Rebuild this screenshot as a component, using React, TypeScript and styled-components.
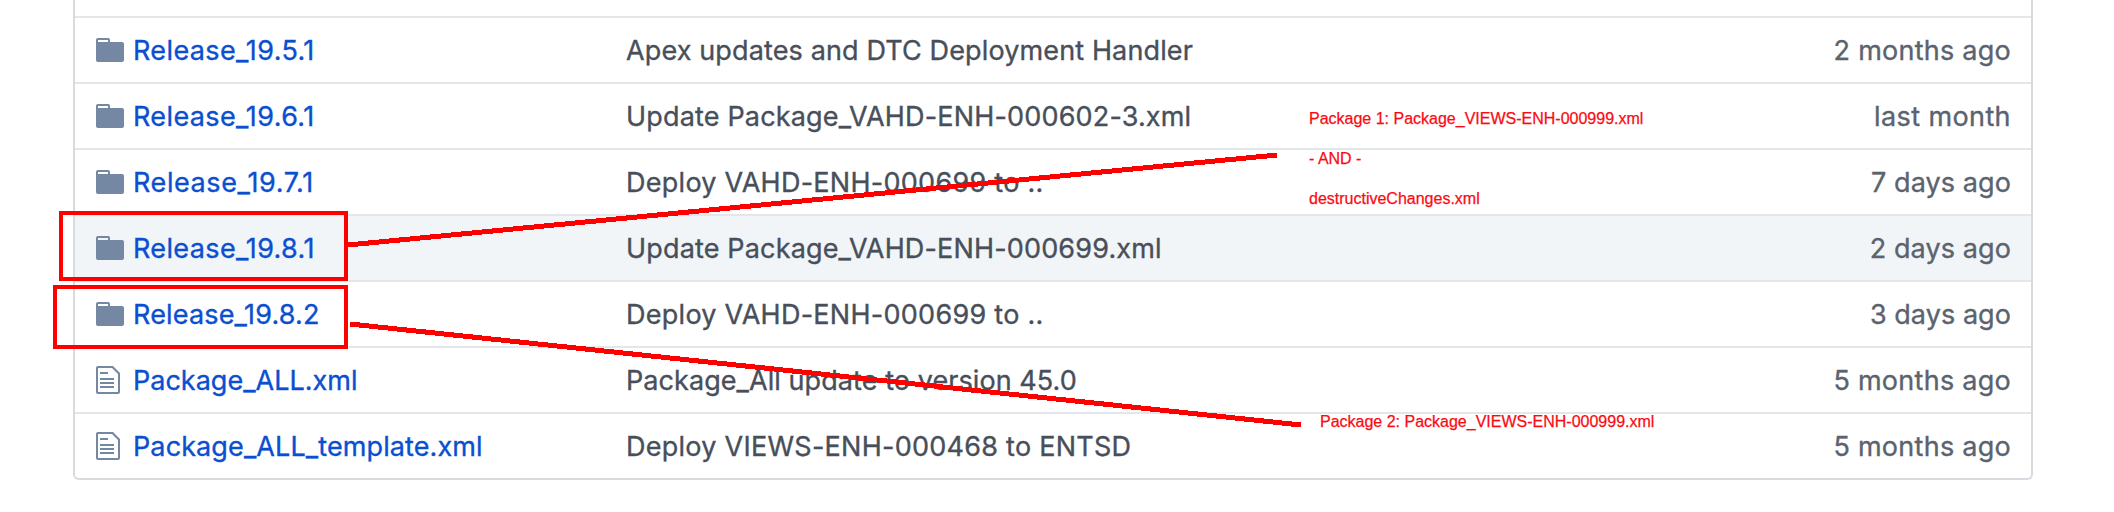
import React from 'react';
import styled, { createGlobalStyle } from 'styled-components';

const GlobalStyle = createGlobalStyle`
  * { box-sizing: border-box; }
  body {
    margin: 0;
    background: #fff;
    font-family: Inter, 'Liberation Sans', sans-serif;
  }
`;

const Page = styled.main`
  position: relative;
  height: 512px;
  padding: 0 81px 0 73px;
  overflow: hidden;
`;

const FileTable = styled.div`
  display: flex;
  flex-direction: column;
  height: 480px;
  padding-top: 16px;
  border: 2px solid #d7dbe0;
  border-top: 0;
  border-radius: 0 0 6px 6px;
`;

const Row = styled.div<{ $active?: boolean }>`
  display: grid;
  grid-template-columns: 37px 493px 1fr auto;
  align-items: center;
  height: 66px;
  padding: 0 20px 0 21px;
  border-top: 2px solid #e3e7eb;
  background: ${(p) => (p.$active ? '#f1f5f8' : 'transparent')};
`;

const Icon = styled.svg`
  display: block;
  height: 32px;
  fill: #7488a3;
`;

const Cell = styled.span<{ $spacing: number }>`
  padding-top: 2px;
  font-size: 27px;
  line-height: 62px;
  white-space: nowrap;
  letter-spacing: ${(p) => p.$spacing}px;
  -webkit-text-stroke: 0.35px currentColor;
`;

const Name = styled(Cell).attrs({ as: 'a' })`
  color: #0b4fd0;
`;

const Message = styled(Cell)`
  color: #484f5a;
`;

const Age = styled(Cell)`
  color: #5a636e;
`;

const Highlight = styled.div<{ $left: number; $top: number; $height: number }>`
  position: absolute;
  left: ${(p) => p.$left}px;
  top: ${(p) => p.$top}px;
  width: ${(p) => 348 - p.$left}px;
  height: ${(p) => p.$height}px;
  border: 4px solid #fe0000;
`;

const Pointers = styled.svg`
  position: absolute;
  left: 0;
  top: 0;
  pointer-events: none;
  stroke: #fe0000;
  stroke-width: 5;
  shape-rendering: crispEdges;
`;

const Note = styled.div<{ $left: number; $top: number }>`
  position: absolute;
  left: ${(p) => p.$left}px;
  top: ${(p) => p.$top}px;
  font-family: 'Liberation Sans', Arial, sans-serif;
  font-size: 16px;
  line-height: 40px;
  color: #fb0a12;
  -webkit-text-stroke: 0.25px #fb0a12;
  white-space: nowrap;
`;

const NoteLine = styled.div`
  min-height: 40px;
`;

const FolderIcon = () => (
  <Icon viewBox="0 0 14 16" width="28">
    <path d="M13 4H7V3c0-.66-.31-1-1-1H1c-.55 0-1 .45-1 1v10c0 .55.45 1 1 1h12c.55 0 1-.45 1-1V5c0-.55-.45-1-1-1zM6 4H1V3h5v1z" />
  </Icon>
);

const FileIcon = () => (
  <Icon viewBox="0 0 12 16" width="24">
    <path d="M6 5H2V4h4v1zM2 8h7V7H2v1zm0 2h7V9H2v1zm0 2h7v-1H2v1zm10-7.5V14c0 .55-.45 1-1 1H1c-.55 0-1-.45-1-1V2c0-.55.45-1 1-1h7.5L12 4.5zM11 5L8 2H1v12h10V5z" />
  </Icon>
);

type Entry = {
  name: string;
  message: string;
  age: string;
  // letter-spacing of the name, the message and the age
  spacing: [number, number, number];
  file?: boolean;
  active?: boolean;
};

const entries: Entry[] = [
  { name: 'Release_19.5.1', message: 'Apex updates and DTC Deployment Handler', age: '2 months ago', spacing: [0.38, 0.13, 0.25] },
  { name: 'Release_19.6.1', message: 'Update Package_VAHD-ENH-000602-3.xml', age: 'last month', spacing: [0.38, 0.17, 0.4] },
  { name: 'Release_19.7.1', message: 'Deploy VAHD-ENH-000699 to ..', age: '7 days ago', spacing: [0.58, 0.27, 0.09] },
  { name: 'Release_19.8.1', message: 'Update Package_VAHD-ENH-000699.xml', age: '2 days ago', spacing: [0.37, 0.16, 0.1], active: true },
  { name: 'Release_19.8.2', message: 'Deploy VAHD-ENH-000699 to ..', age: '3 days ago', spacing: [0.16, 0.27, 0.06] },
  { name: 'Package_ALL.xml', message: 'Package_All update to version 45.0', age: '5 months ago', spacing: [0.01, 0.07, 0.27], file: true },
  { name: 'Package_ALL_template.xml', message: 'Deploy VIEWS-ENH-000468 to ENTSD', age: '5 months ago', spacing: [0.11, 0.26, 0.27], file: true },
];

export default function App() {
  return (
    <Page>
      <GlobalStyle />
      <FileTable>
        {entries.map((e) => (
          <Row key={e.name} $active={e.active}>
            {e.file ? <FileIcon /> : <FolderIcon />}
            <Name $spacing={e.spacing[0]}>{e.name}</Name>
            <Message $spacing={e.spacing[1]}>{e.message}</Message>
            <Age $spacing={e.spacing[2]}>{e.age}</Age>
          </Row>
        ))}
      </FileTable>

      <Highlight $left={59} $top={211} $height={70} />
      <Highlight $left={53} $top={285} $height={64} />
      <Pointers width="2114" height="512">
        <line x1="348" y1="245" x2="1277" y2="155" />
        <line x1="350" y1="324" x2="1301" y2="425" />
      </Pointers>
      <Note $left={1309} $top={99}>
        <NoteLine>Package 1: Package_VIEWS-ENH-000999.xml</NoteLine>
        <NoteLine>- AND -</NoteLine>
        <NoteLine>destructiveChanges.xml</NoteLine>
      </Note>
      <Note $left={1320} $top={402}>
        <NoteLine>Package 2: Package_VIEWS-ENH-000999.xml</NoteLine>
      </Note>
    </Page>
  );
}
